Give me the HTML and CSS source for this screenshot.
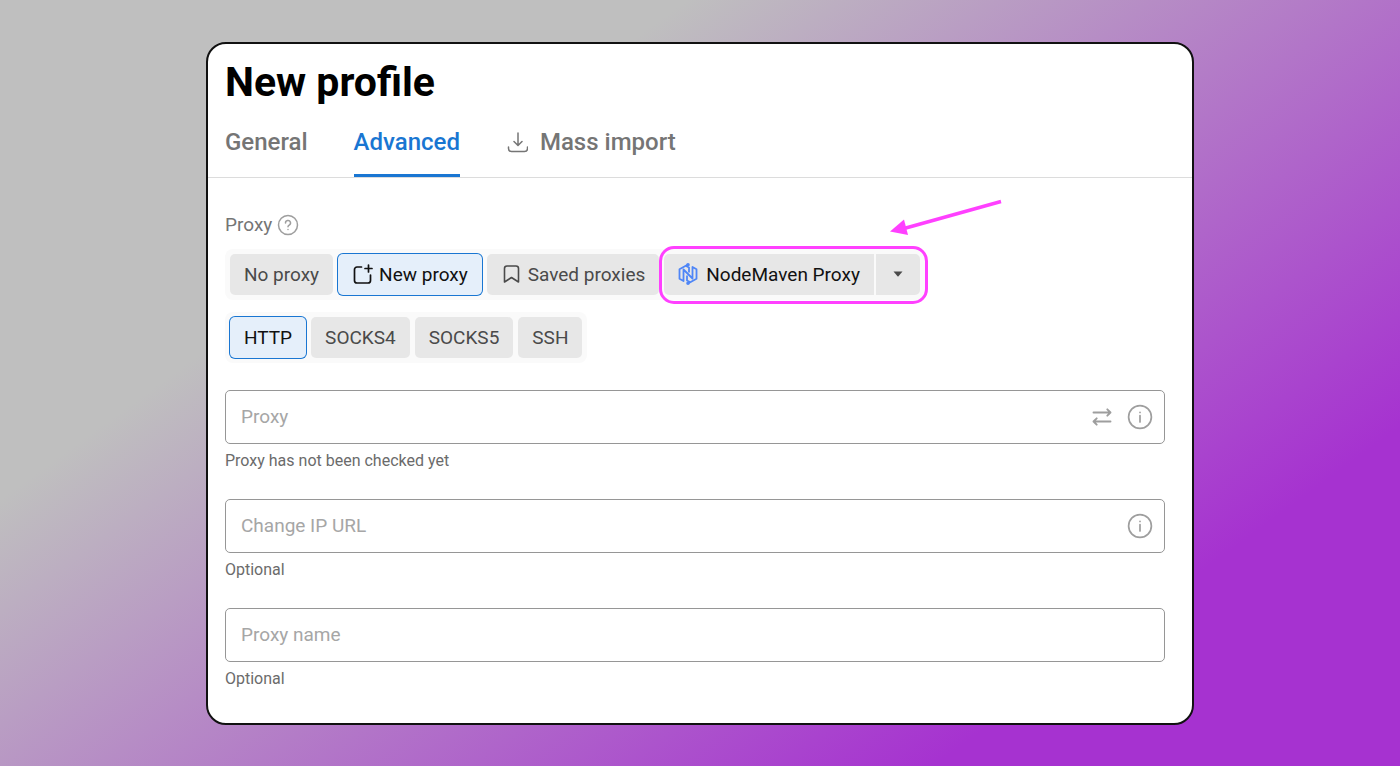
FILE: index.html
```html
<!DOCTYPE html>
<html lang="en">
<head>
    <meta charset="UTF-8">
    <meta name="viewport" content="width=device-width, initial-scale=1.0">
    <title>New profile</title>
    <link rel="stylesheet" href="styles.css">
</head>
<body>
    <main class="card">
        <header class="card-header">
            <h1>New profile</h1>
            <nav class="tabs">
                <a class="tab" href="#general">General</a>
                <a class="tab active" href="#advanced" aria-current="page">Advanced</a>
                <a class="tab" href="#import">
                    <svg width="22" height="22" viewBox="0 0 22 22" fill="none" stroke="currentColor" stroke-width="1.500" stroke-linecap="round" stroke-linejoin="round" aria-hidden="true">
                        <path d="M12 2v12M8 10.500l4 4 4-4M2.500 16v1.500a3 3 0 0 0 3 3h13a3 3 0 0 0 3-3V16"/>
                    </svg>
                    Mass import
                </a>
            </nav>
        </header>
        <form class="proxy-form">
            <div class="section-label">
                <span>Proxy</span>
                <button type="button" class="icon-btn" aria-label="Help">
                    <svg width="22" height="22" viewBox="0 0 22 22" fill="none" stroke="currentColor" stroke-width="1.500" stroke-linecap="round" aria-hidden="true">
                        <circle cx="11" cy="11" r="9.500"/>
                        <path d="M8.500 9a2.500 2.500 0 1 1 3.700 2.100c-.8.5-1.200.9-1.200 1.700"/>
                        <path d="M11 15.400v.1"/>
                    </svg>
                </button>
            </div>

            <div class="group">
                <button type="button" class="option">No proxy</button>
                <button type="button" class="option selected">
                    <svg width="22" height="22" viewBox="0 0 22 22" fill="none" stroke="currentColor" stroke-width="1.700" stroke-linecap="round" stroke-linejoin="round" aria-hidden="true">
                        <path d="M9.500 4H5a2.500 2.500 0 0 0-2.500 2.500v11A2.500 2.500 0 0 0 5 20h11a2.500 2.500 0 0 0 2.500-2.500V12"/>
                        <path d="M16.500 2v7M13 5.500h7"/>
                    </svg>
                    New proxy
                </button>
                <button type="button" class="option">
                    <svg width="22" height="22" viewBox="0 0 22 22" fill="none" stroke="currentColor" stroke-width="1.600" stroke-linejoin="round" aria-hidden="true">
                        <path d="M3.500 19V5.500A2.500 2.500 0 0 1 6 3h9A2.500 2.500 0 0 1 17.500 5.500V19l-7-4.500z"/>
                    </svg>
                    Saved proxies
                </button>
                <div class="highlight">
                    <button type="button" class="option provider">
                        <svg width="20" height="22" viewBox="0 0 20 22" fill="none" stroke="#4f86f7" stroke-width="1.800" stroke-linejoin="round" aria-hidden="true">
                            <path d="M10 1.500 1.500 6.200v9.600l4 2.200V6.500l9 9V4l4 2.200v9.600L10 20.500"/>
                            <path d="M9 12.500v5l3 1.500M11 9.500v-5L8 3"/>
                            <circle cx="10" cy="1.800" r=".9" fill="#4f86f7"/>
                            <circle cx="10" cy="20.200" r=".9" fill="#4f86f7"/>
                        </svg>
                        NodeMaven Proxy
                    </button>
                    <button type="button" class="option caret" aria-label="Choose provider">
                        <svg width="10" height="6" viewBox="0 0 10 6" fill="currentColor" aria-hidden="true">
                            <path d="M.5.500h9L5.500 5.300a.7.7 0 0 1-1 0z"/>
                        </svg>
                    </button>
                    <svg class="arrow" width="114" height="40" viewBox="0 0 114 40" aria-hidden="true">
                        <path d="M111 3.500 14 30.500" stroke="#ff40ff" stroke-width="3.500" fill="none"/>
                        <path d="M0 33.500 14 21.500 18 37z" fill="#ff40ff"/>
                    </svg>
                </div>
            </div>

            <div class="group">
                <button type="button" class="option selected">HTTP</button>
                <button type="button" class="option">SOCKS4</button>
                <button type="button" class="option">SOCKS5</button>
                <button type="button" class="option">SSH</button>
            </div>

            <div class="field">
                <div class="input-box">
                    <input type="text" placeholder="Proxy" aria-label="Proxy" aria-describedby="proxy-hint">
                    <button type="button" class="icon-btn" aria-label="Swap">
                        <svg width="20" height="20" viewBox="0 0 20 20" fill="none" stroke="currentColor" stroke-width="1.900" stroke-linecap="round" stroke-linejoin="round" aria-hidden="true">
                            <path d="M1.500 5.500h17M15.300 2.300l3.200 3.200-3.200 3.200M18.500 14.500h-17M4.700 11.300l-3.200 3.200 3.200 3.200"/>
                        </svg>
                    </button>
                    <button type="button" class="icon-btn" aria-label="Proxy format">
                        <svg width="26" height="26" viewBox="0 0 26 26" fill="none" stroke="currentColor" stroke-width="1.700" stroke-linecap="round" aria-hidden="true">
                            <circle cx="13" cy="13" r="11.400"/>
                            <path d="M13 11.500V18M13 8.300v.2"/>
                        </svg>
                    </button>
                </div>
                <p class="hint" id="proxy-hint">Proxy has not been checked yet</p>
            </div>

            <div class="field">
                <div class="input-box">
                    <input type="text" placeholder="Change IP URL" aria-label="Change IP URL" aria-describedby="url-hint">
                    <button type="button" class="icon-btn" aria-label="About the change IP URL">
                        <svg width="26" height="26" viewBox="0 0 26 26" fill="none" stroke="currentColor" stroke-width="1.700" stroke-linecap="round" aria-hidden="true">
                            <circle cx="13" cy="13" r="11.400"/>
                            <path d="M13 11.500V18M13 8.300v.2"/>
                        </svg>
                    </button>
                </div>
                <p class="hint" id="url-hint">Optional</p>
            </div>

            <div class="field">
                <div class="input-box">
                    <input type="text" placeholder="Proxy name" aria-label="Proxy name" aria-describedby="name-hint">
                </div>
                <p class="hint" id="name-hint">Optional</p>
            </div>
        </form>
    </main>
</body>
</html>
```
FILE: styles.css
```css
* {
    box-sizing: border-box;
}

body {
    font-family: Roboto, Arial, sans-serif;
    margin: 0;
    background: linear-gradient(144deg, #bfbfbf 28%, #a632d0 81%);
    display: flex;
    justify-content: center;
    align-items: center;
    min-height: 100vh;
}

.card {
    width: 100%;
    max-width: 988px;
    background-color: #fff;
    border: 2px solid #111;
    border-radius: 20px;
}

.card-header {
    padding: 12px 17px 0;
    border-bottom: 1px solid #dcdcdc;
}

h1 {
    font-size: 41px;
    line-height: 52px;
    margin: 0;
    color: #000;
}

.tabs {
    display: flex;
    gap: 46px;
}

.tab {
    display: flex;
    align-items: center;
    gap: 12px;
    padding: 18px 0 16px;
    border-bottom: 3px solid transparent;
    color: #757575;
    font-size: 24px;
    font-weight: 500;
    line-height: 32px;
    text-decoration: none;
}

.tab.active {
    color: #1976d2;
    border-bottom-color: #1976d2;
}

.proxy-form {
    padding: 34px 27px 33px 17px;
}

.section-label {
    display: flex;
    align-items: center;
    gap: 5px;
    margin-bottom: 11px;
    color: #757575;
    font-size: 19px;
    line-height: 26px;
}

.group {
    display: flex;
    gap: 5px;
    width: fit-content;
    padding: 5px;
    margin-bottom: 12px;
    background-color: #fafafa;
    border-radius: 8px;
}

.option {
    display: flex;
    align-items: center;
    gap: 5px;
    height: 41px;
    padding: 0 14px;
    border: none;
    border-radius: 5px;
    background-color: #e7e7e7;
    color: #4a4a4a;
    font-family: inherit;
    font-size: 19px;
    cursor: pointer;
}

.option.selected {
    background-color: #e5effa;
    box-shadow: 0 0 0 1px #1976d2;
    color: #111;
}

.highlight {
    position: relative;
    display: flex;
    gap: 2px;
}

.highlight::after {
    content: "";
    position: absolute;
    inset: -8px -8px -9px -5px;
    border: 3px solid #ff40ff;
    border-radius: 15px;
    pointer-events: none;
}

.provider {
    gap: 8px;
    border-radius: 5px 0 0 5px;
    color: #111;
}

.caret {
    padding: 0 17px;
    border-radius: 0 5px 5px 0;
}

.arrow {
    position: absolute;
    top: -56px;
    right: -84px;
}

.icon-btn {
    display: flex;
    padding: 0;
    border: none;
    background: none;
    color: #9e9e9e;
    cursor: pointer;
}

.field {
    margin-top: 27px;
}

.input-box {
    display: flex;
    align-items: center;
    gap: 15px;
    height: 54px;
    padding: 0 11px 0 15px;
    border: 1px solid #969696;
    border-radius: 5px;
}

.input-box input {
    flex: 1;
    min-width: 0;
    padding: 0;
    border: none;
    outline: none;
    background: none;
    color: #111;
    font-family: inherit;
    font-size: 19px;
}

.input-box input::placeholder {
    color: #a6a6a6;
}

.hint {
    margin: 6px 0 0;
    color: #6b6b6b;
    font-size: 16px;
    line-height: 22px;
}
```
